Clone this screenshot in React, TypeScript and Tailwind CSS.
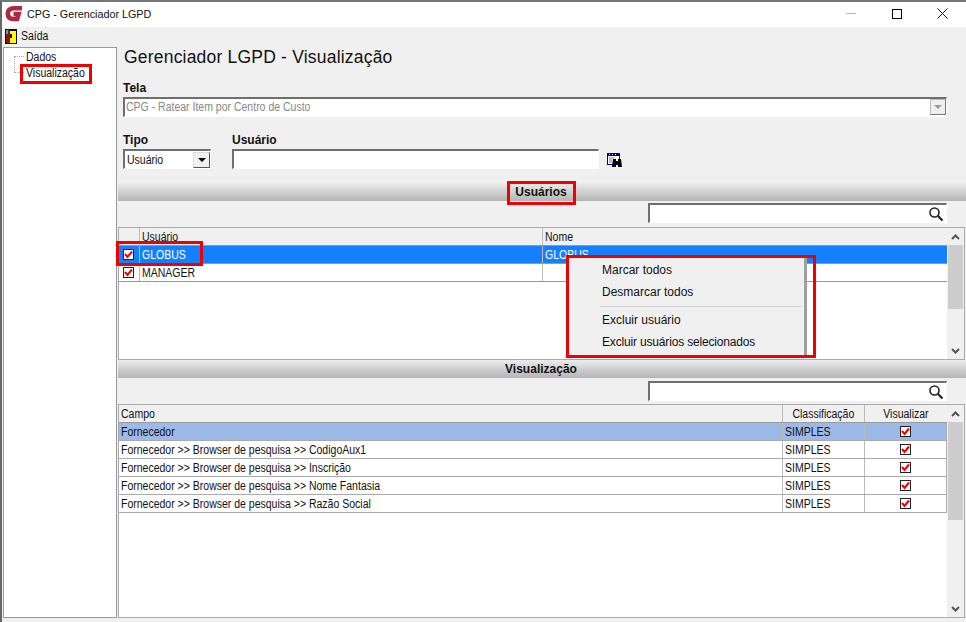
import React from 'react';

const font = "font-['Liberation_Sans',Arial,sans-serif]";

// the app uses a tall narrow bitmap-like font, so squeeze the closest one we have
const Narrow: React.FC<{ children: React.ReactNode; center?: boolean }> = ({ children, center }) => (
  <span className={`inline-block scale-x-[0.875] whitespace-nowrap ${center ? 'origin-center' : 'origin-left'}`}>{children}</span>
);

const CheckBox: React.FC = () => (
  <span className="flex h-[11px] w-[11px] items-center justify-center border border-[#222] bg-white">
    <svg width="9" height="9" viewBox="0 0 9 9">
      <path d="M1 4 L3.5 7 L8 1.5" fill="none" stroke="#f00000" strokeWidth="2" />
    </svg>
  </span>
);

const Chevron: React.FC<{ up?: boolean }> = ({ up }) => (
  <svg width="9" height="6" viewBox="0 0 9 6">
    <path d={up ? 'M1 5 L4.5 1.5 L8 5' : 'M1 1 L4.5 4.5 L8 1'} fill="none" stroke="#555" strokeWidth="2" />
  </svg>
);

const Scrollbar: React.FC<{ thumb: string }> = ({ thumb }) => (
  <div className="flex w-[17px] shrink-0 flex-col bg-[#f0f0f0]">
    <div className="flex h-[17px] items-center justify-center"><Chevron up /></div>
    <div className="min-h-0 flex-1"><div className={`mx-auto w-[15px] bg-[#cdcdcd] ${thumb}`} /></div>
    <div className="flex h-[17px] items-center justify-center"><Chevron /></div>
  </div>
);

const SearchBox: React.FC = () => (
  <div className="flex h-[20px] w-[299px] items-center justify-end border-t-2 border-l-2 border-t-[#6f6f6f] border-l-[#6f6f6f] border-r border-b border-r-white border-b-white bg-white pr-[2px]">
    <svg width="16" height="16" viewBox="0 0 16 16">
      <circle cx="6.5" cy="6.5" r="4.5" fill="none" stroke="#222" strokeWidth="1.6" />
      <path d="M10 10 L14.5 14.5" stroke="#222" strokeWidth="2.2" />
    </svg>
  </div>
);

const SectionBar: React.FC<{ title: string }> = ({ title }) => (
  <div className="flex h-[18px] items-center justify-center bg-gradient-to-b from-[#ececec] to-[#b4b4b4] text-[12px] font-bold text-[#111]">
    <span className="-translate-x-px">{title}</span>
  </div>
);

const fields = [
  'Fornecedor',
  'Fornecedor >> Browser de pesquisa >> CodigoAux1',
  'Fornecedor >> Browser de pesquisa >> Inscrição',
  'Fornecedor >> Browser de pesquisa >> Nome Fantasia',
  'Fornecedor >> Browser de pesquisa >> Razão Social',
];

const App: React.FC = () => {
  return (
    <div className={`${font} relative flex h-[622px] w-[966px] flex-col overflow-hidden border-t-2 border-l-2 border-t-[#777] border-l-[#666] bg-[#f0f0f0] text-[12px] leading-[14px] text-[#111]`}>
      {/* title bar */}
      <div className="flex h-[25px] shrink-0 items-center bg-white pb-[2px] pl-[3px]">
        <svg width="18" height="17" viewBox="0 0 18 17" className="mr-[4px]">
          <path d="M17 3.2 H9 Q2.8 3.2 2.8 8.6 Q2.8 14 8 14 H12.2 L13.6 9 H8.5" fill="none" stroke="#ae2a42" strokeWidth="4.6" />
        </svg>
        <span className="inline-block origin-left scale-x-[0.935] whitespace-nowrap text-[11.5px]">CPG - Gerenciador LGPD</span>
        <div className="ml-auto flex items-center">
          <div className="mr-[36px] h-px w-[10px] bg-[#b5b5b5]" />
          <div className="mr-[35px] h-[10px] w-[10px] border border-black" />
          <svg width="11" height="11" viewBox="0 0 11 11" className="mr-[18px]">
            <path d="M0.5 0.5 L10.5 10.5 M10.5 0.5 L0.5 10.5" stroke="#111" strokeWidth="1" />
          </svg>
        </div>
      </div>

      {/* menu bar */}
      <div className="flex h-[18px] shrink-0 items-center pl-[3px]">
        <svg width="12" height="15" viewBox="0 0 12 15" className="mr-[4px]">
          <rect x="0" y="0" width="12" height="15" fill="#111" />
          <rect x="1" y="1" width="4" height="13" fill="#8c1515" />
          <rect x="1" y="1" width="2" height="4" fill="#2fb7c9" />
          <rect x="5" y="2" width="6" height="12" fill="#ffff00" />
          <rect x="5" y="5" width="2" height="4" fill="#111" />
        </svg>
        <Narrow>Saída</Narrow>
      </div>

      <div className="flex min-h-0 flex-1 pl-px">
        {/* tree */}
        <div className="relative mb-[4px] mt-[2px] w-[114px] shrink-0 border border-[#999] bg-white pl-[22px] pt-[2px]">
          <div className="absolute left-[10px] top-[8px] h-[16px] border-l border-dotted border-[#aaa]" />
          <div className="absolute left-[10px] top-[8px] w-[10px] border-t border-dotted border-[#aaa]" />
          <div className="absolute left-[10px] top-[24px] w-[10px] border-t border-dotted border-[#aaa]" />
          <div className="h-[16px]"><Narrow>Dados</Narrow></div>
          <div className="h-[16px]"><Narrow>Visualização</Narrow></div>
        </div>

        {/* content */}
        <div className="ml-px flex min-w-0 flex-1 flex-col">
          <div className="flex h-[22px] items-end pl-[6px] text-[17.5px] leading-[20px] tracking-[0.2px]">Gerenciador LGPD - Visualização</div>

          <div className="pl-[5px] pt-[14px] font-bold leading-[14px]">Tela</div>
          <div className="ml-[5px] mt-[2px] flex h-[20px] w-[824px] items-center border-t-2 border-l-2 border-t-[#6f6f6f] border-l-[#6f6f6f] border-r border-b border-r-white border-b-white bg-white pb-[1px] pl-[1px] text-[#888]">
            <Narrow>CPG - Ratear Item por Centro de Custo</Narrow>
            <span className="ml-auto flex h-[16px] w-[16px] items-center justify-center border border-[#bbb] border-r-[#777] border-b-[#777] bg-[#f0f0f0]">
              <span className="border-x-4 border-t-4 border-x-transparent border-t-[#999]" />
            </span>
          </div>

          <div className="flex pl-[5px] pt-[16px]">
            <div className="w-[109px]">
              <div className="font-bold">Tipo</div>
              <div className="mt-[2px] flex h-[20px] w-[88px] items-center border-t-2 border-l-2 border-t-[#6f6f6f] border-l-[#6f6f6f] border-r border-b border-r-white border-b-white bg-white pl-[2px]">
                <Narrow>Usuário</Narrow>
                <span className="ml-auto flex h-[16px] w-[17px] items-center justify-center border border-[#ddd] border-r-[#555] border-b-[#555] bg-[#f0f0f0]">
                  <span className="border-x-4 border-t-4 border-x-transparent border-t-black" />
                </span>
              </div>
            </div>
            <div>
              <div className="font-bold">Usuário</div>
              <div className="mt-[2px] h-[20px] w-[367px] border-t-2 border-l-2 border-t-[#6f6f6f] border-l-[#6f6f6f] border-r border-b border-r-white border-b-white bg-white" />
            </div>
            <svg width="16" height="16" viewBox="0 0 16 16" className="ml-[8px] mt-[20px]">
              <rect x="0.5" y="0.5" width="12" height="11" fill="#fff" stroke="#000080" />
              <rect x="0" y="0" width="13" height="3" fill="#000080" />
              <path d="M2 1.5h1M5 1.5h1M8 1.5h1" stroke="#fff" />
              <path d="M2 5h5M2 7h3M2 9h3" stroke="#6a7aa8" />
              <path d="M6 6h3v2h2V6h3l1 8h-4v-3H9v3H5z" fill="#000" />
            </svg>
          </div>

          {/* usuarios */}
          <div className="mt-[14px]"><SectionBar title="Usuários" /></div>
          <div className="flex h-[26px] pl-[530px] pt-[2px]"><SearchBox /></div>
          <div className="flex h-[133px] w-[847px] border border-[#aaa] bg-white">
            <div className="min-w-0 flex-1">
              <div className="flex h-[18px] border-b border-[#999] bg-[#f0f0f0]">
                <div className="w-[21px] border-r border-[#bbb]" />
                <div className="w-[403px] border-r border-[#bbb] pl-[2px] pt-[2px]"><Narrow>Usuário</Narrow></div>
                <div className="pl-[2px] pt-[2px]"><Narrow>Nome</Narrow></div>
              </div>
              <div className="flex h-[18px] border-b border-[#999] bg-[#1580ff] text-white">
                <div className="flex w-[21px] items-center border-r border-[#bbb] pl-[4px]"><CheckBox /></div>
                <div className="w-[403px] border-r border-[#bbb] pl-[2px] pt-[2px]"><Narrow>GLOBUS</Narrow></div>
                <div className="pl-[2px] pt-[2px]"><Narrow>GLOBUS</Narrow></div>
              </div>
              <div className="flex h-[18px] border-b border-[#999]">
                <div className="flex w-[21px] items-center border-r border-[#bbb] pl-[4px]"><CheckBox /></div>
                <div className="w-[403px] border-r border-[#bbb] pl-[2px] pt-[2px]"><Narrow>MANAGER</Narrow></div>
              </div>
            </div>
            <Scrollbar thumb="h-[64px]" />
          </div>

          {/* visualizacao */}
          <SectionBar title="Visualização" />
          <div className="flex h-[26px] pl-[530px] pt-[3px]"><SearchBox /></div>
          <div className="mb-[4px] flex min-h-0 w-[847px] flex-1 border border-[#aaa] bg-white">
            <div className="min-w-0 flex-1">
              <div className="flex h-[18px] border-b border-[#999] bg-[#f0f0f0]">
                <div className="w-[664px] border-r border-[#bbb] pl-[2px] pt-[2px]"><Narrow>Campo</Narrow></div>
                <div className="w-[82px] border-r border-[#bbb] pt-[2px] text-center"><Narrow center>Classificação</Narrow></div>
                <div className="flex-1 pt-[2px] text-center"><Narrow center>Visualizar</Narrow></div>
              </div>
              {fields.map((f, i) => (
                <div key={f} className={`flex h-[18px] border-b border-[#aaa] ${i === 0 ? 'bg-[#9db9e8]' : ''}`}>
                  <div className="w-[664px] border-r border-[#bbb] pl-[2px] pt-[2px]"><Narrow>{f}</Narrow></div>
                  <div className="w-[82px] border-r border-[#bbb] pl-[2px] pt-[2px]"><Narrow>SIMPLES</Narrow></div>
                  <div className="flex flex-1 items-center justify-center border-r border-[#aaa]"><CheckBox /></div>
                </div>
              ))}
            </div>
            <Scrollbar thumb="h-[98px]" />
          </div>
        </div>
      </div>

      {/* context menu */}
      <div className="absolute left-[566px] top-[254px] h-[99px] w-[239px] border-r-[3px] border-r-[#a0a0a0] bg-[#f0f0f0] pl-[34px]">
        <div className="flex h-[22px] items-center pt-[6px]">Marcar todos</div>
        <div className="flex h-[22px] items-center pt-[6px]">Desmarcar todos</div>
        <div className="-ml-[2px] mr-[2px] mt-[6px] h-px bg-[#d0d0d0]" />
        <div className="flex h-[22px] items-center pt-[3px]">Excluir usuário</div>
        <div className="flex h-[22px] items-center pt-[4px] tracking-[-0.17px]">Excluir usuários selecionados</div>
      </div>

      {/* red highlights */}
      <div className="absolute left-[18px] top-[62px] h-[20px] w-[72px] border-[3px] border-[#f00000]" />
      <div className="absolute left-[505px] top-[179px] h-[24px] w-[69px] border-[3px] border-[#f00000]" />
      <div className="absolute left-[114px] top-[239px] h-[25px] w-[87px] border-[3px] border-[#f00000]" />
      <div className="absolute left-[564px] top-[253px] h-[103px] w-[250px] border-[3px] border-[#f00000]" />
    </div>
  );
};

export default App;
